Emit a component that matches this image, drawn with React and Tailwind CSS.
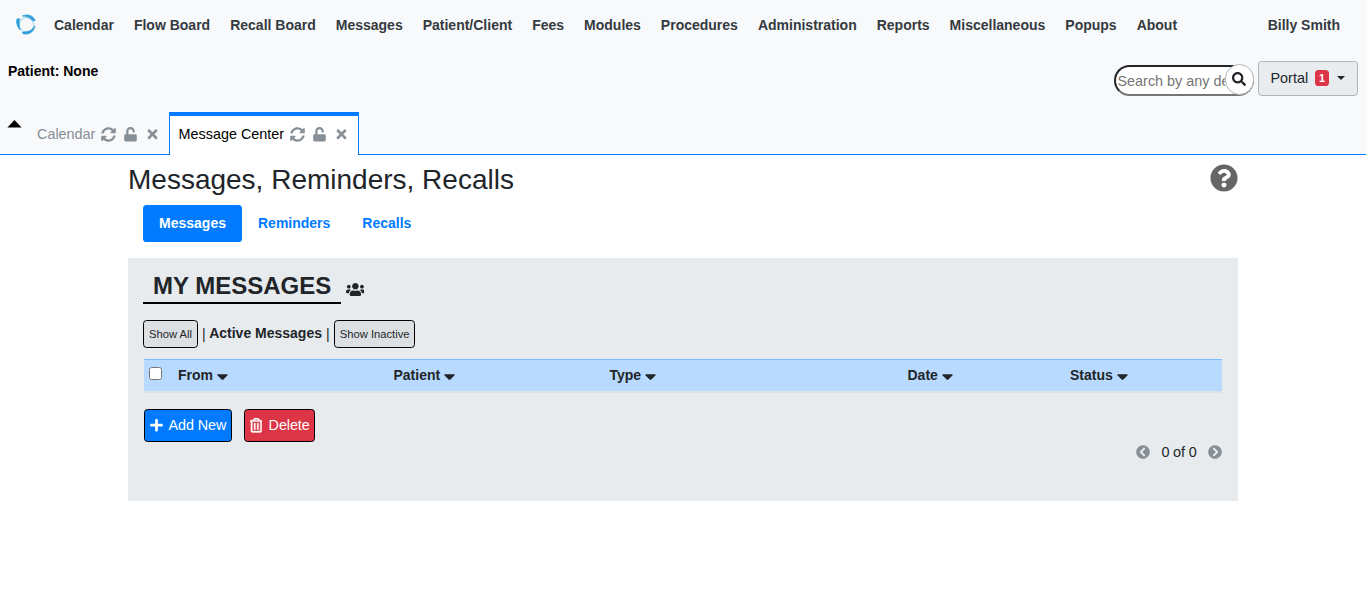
import React from 'react';
import {
  FaSyncAlt, FaUnlock, FaTimes, FaSearch, FaUsers, FaPlus, FaRegTrashAlt,
  FaChevronCircleLeft, FaChevronCircleRight, FaQuestionCircle,
} from 'react-icons/fa';

const MENU = ['Calendar', 'Flow Board', 'Recall Board', 'Messages', 'Patient/Client', 'Fees', 'Modules', 'Procedures', 'Administration', 'Reports', 'Miscellaneous', 'Popups', 'About'];

const COLUMNS = [
  { label: 'From', width: 'w-[215.5px]' },
  { label: 'Patient', width: 'w-[216px]' },
  { label: 'Type', width: 'w-[298px]' },
  { label: 'Date', width: 'w-[162.5px]' },
  { label: 'Status', width: 'w-[152px]' },
];

function Logo() {
  return (
    <svg className="h-[22px] w-[22px]" viewBox="0 0 22 22" fill="none" stroke="#2f9fd8">
      <circle cx="11.4" cy="10.8" r="7.2" strokeWidth=".9" stroke="#8ccbec" />
      <path d="M4.6 4.8L2 5C1 8.6 2.2 13 5.2 15.8C4 12.5 3.6 9 4.6 4.8Z" fill="#2f9fd8" strokeWidth=".8" />
      <path d="M7.4 2C12.5-.2 18.2 1.4 20.2 6.6L17.8 6.8C15.5 3.6 12.3 2 7.4 2Z" fill="#2f9fd8" strokeWidth=".8" />
      <path d="M7.6 18L8 19.8C14 21 19 17.8 20 12C17.6 16 14 18.2 7.6 18Z" fill="#2f9fd8" strokeWidth=".8" />
    </svg>
  );
}

function TabIcons() {
  return (
    <span className="flex items-center text-[#868e96]">
      <FaSyncAlt className="ml-[5.5px] h-[15px] w-[15px]" />
      <FaUnlock className="ml-[8px] h-[14.4px] w-[13px]" />
      <FaTimes className="ml-[10px] h-[14.4px] w-[11px]" />
    </span>
  );
}

function Header() {
  return (
    <header className="flex h-[155px] flex-col bg-[#f8f9fa]">
      <nav className="flex h-[50px] items-center pl-[15px] pr-[26px] text-sm font-bold text-[#343a40]">
        <Logo />
        <div className="ml-[17px] flex gap-5 whitespace-nowrap">
          {MENU.map((item) => <span key={item}>{item}</span>)}
        </div>
        <span className="ml-auto">Billy Smith</span>
      </nav>
      <div className="flex h-[62px] items-start justify-between pl-2 pr-2">
        <div className="pt-[11px] text-sm font-bold text-black">Patient: None</div>
        <div className="flex pt-[11px]">
          <div className="mt-[4px] flex h-[31px] w-[140px] rounded-[16px] border-2 border-t-[#212529] border-l-[#212529] border-r-[#767676] border-b-[#767676] bg-white">
            <span className="w-[108.5px] shrink-0 overflow-hidden whitespace-nowrap pl-[1.5px] pt-[3px] text-[14.4px] leading-[22px] text-[#757575]">Search by any demographics</span>
            <button className="-mt-[3px] flex h-[31px] w-[29.5px] shrink-0 items-center justify-center rounded-full border border-[#adb5bd] bg-white pb-[2px] text-[#212529]">
              <FaSearch className="h-[14px] w-[14px]" />
            </button>
          </div>
          <button className="ml-1 flex h-[35px] w-[100px] items-center rounded-[3.6px] border border-[#adb5bd] bg-[#e9ecef] pl-[11.5px] text-[14.4px] text-[#212529]">
            <span>Portal</span>
            <span className="-mt-0.5 ml-[7px] flex h-4 w-[14px] items-center justify-center rounded-[3.6px] bg-[#dc3545] text-[10.8px] font-bold leading-4 text-white">1</span>
            <span className="-mt-0.5 ml-[8px] h-0 w-0 border-x-4 border-t-4 border-x-transparent border-t-[#212529]" />
          </button>
        </div>
      </div>
      <div className="flex h-[43px] text-[14.4px]">
        <div className="flex w-[169px] border-b border-[#007bff] pl-[7px]">
          <svg className="mt-[8px] h-[8px] w-[15px] shrink-0" viewBox="0 0 15 8"><path d="M7.5 0L14.6 7.6H.4Z" fill="#000" /></svg>
          <div className="ml-[15px] flex h-[43px] items-center whitespace-nowrap pt-[2px] text-[#868e96]">
            Calendar
            <TabIcons />
          </div>
        </div>
        <div className="flex w-[190px] items-center whitespace-nowrap border-x border-t-4 border-[#007bff] bg-white pb-[2px] pl-[8.5px] text-black">
          <span>Message Center</span>
          <TabIcons />
        </div>
        <div className="flex-1 border-b border-[#007bff]" />
      </div>
    </header>
  );
}

export default function App() {
  return (
    <div className="min-h-[612px] bg-white font-['Liberation_Sans',Arial,sans-serif] text-[#212529]">
      <Header />
      <main className="mx-auto w-[1110px]">
        <div className="flex h-[50px] items-center justify-between">
          <h1 className="-mt-px text-[28px] leading-[34px]">Messages, Reminders, Recalls</h1>
          <FaQuestionCircle className="-mt-[4px] h-[28px] w-[28px] text-[#676666]" />
        </div>
        <div className="flex h-[37px] pl-[15px] text-sm font-bold leading-[36px] text-[#007bff]">
          <button className="w-[99px] rounded-[3.6px] bg-[#007bff] pb-px text-white">Messages</button>
          <span className="pl-4">Reminders</span>
          <span className="pl-8">Recalls</span>
        </div>
        <section className="mt-[16px] h-[243px] bg-[#e7ebee] px-[15px] pt-[10px]">
          <div className="flex items-end">
            <h2 className="h-[36px] w-[198px] border-b-2 border-black pl-[10px] text-2xl font-bold leading-[36px] whitespace-nowrap">MY MESSAGES</h2>
            <FaUsers className="mb-[7px] ml-[4.5px] h-[15px] w-[18.75px]" />
          </div>
          <div className="mt-4 flex h-[28px] items-center text-sm">
            <button className="flex h-[28px] w-[55px] items-center justify-center whitespace-nowrap rounded-[3.6px] border border-black bg-[#dde0e3] text-[11.2px] leading-4">Show All</button>
            <span className="-mt-px ml-[4px]">|</span>
            <span className="-mt-0.5 ml-[3.5px] font-bold">Active Messages</span>
            <span className="-mt-px ml-[4px]">|</span>
            <button className="ml-[4.5px] flex h-[28px] w-[81px] items-center justify-center whitespace-nowrap rounded-[3.6px] border border-black bg-[#dde0e3] text-[11.2px] leading-4">Show Inactive</button>
          </div>
          <div className="ml-px mt-[11px] flex h-[34px] w-[1078px] border-b-2 border-t border-b-[#dee2e6] border-t-[#7abaff] bg-[#b8daff] text-sm font-bold">
            <div className="w-[34px] pl-[5px] pt-[7px]">
              <input type="checkbox" className="block h-[13px] w-[13px]" />
            </div>
            {COLUMNS.map((c) => (
              <div key={c.label} className={`flex items-center pb-px ${c.width}`}>
                {c.label}
                <svg className="ml-[4px] mt-[5px] h-[6.5px] w-[11px]" viewBox="0 0 11 7" preserveAspectRatio="none"><path d="M1 .3H10Q11.2.5 10.4 1.6L6.4 6Q5.5 6.9 4.6 6L.6 1.6Q-.2.5 1 .3Z" fill="#212529" /></svg>
              </div>
            ))}
          </div>
          <div className="ml-px mt-4 flex gap-3 text-[14.4px] text-white">
            <button className="flex h-[33px] w-[88px] items-center rounded-[3.6px] border border-black bg-[#007bff] pl-[4.5px] whitespace-nowrap">
              <FaPlus className="mr-[6px] h-[14.4px] w-[13px]" /><span className="tracking-[-0.08px]">Add New</span>
            </button>
            <button className="flex h-[33px] w-[71px] items-center rounded-[3.6px] border border-black bg-[#dc3545] pl-[4.5px] whitespace-nowrap">
              <FaRegTrashAlt className="mr-[6.5px] h-[14.4px] w-[12.6px]" stroke="#fff" strokeWidth="14" /><span className="tracking-[-0.1px]">Delete</span>
            </button>
          </div>
          <div className="flex h-5 items-center justify-end pr-px text-[14.4px]">
            <FaChevronCircleLeft className="h-[14px] w-[14px] text-[#868e96]" />
            <span className="ml-[11px] mr-[11.5px] pt-px tracking-[-0.15px]">0 of 0</span>
            <FaChevronCircleRight className="h-[14px] w-[14px] text-[#868e96]" />
          </div>
        </section>
      </main>
    </div>
  );
}
